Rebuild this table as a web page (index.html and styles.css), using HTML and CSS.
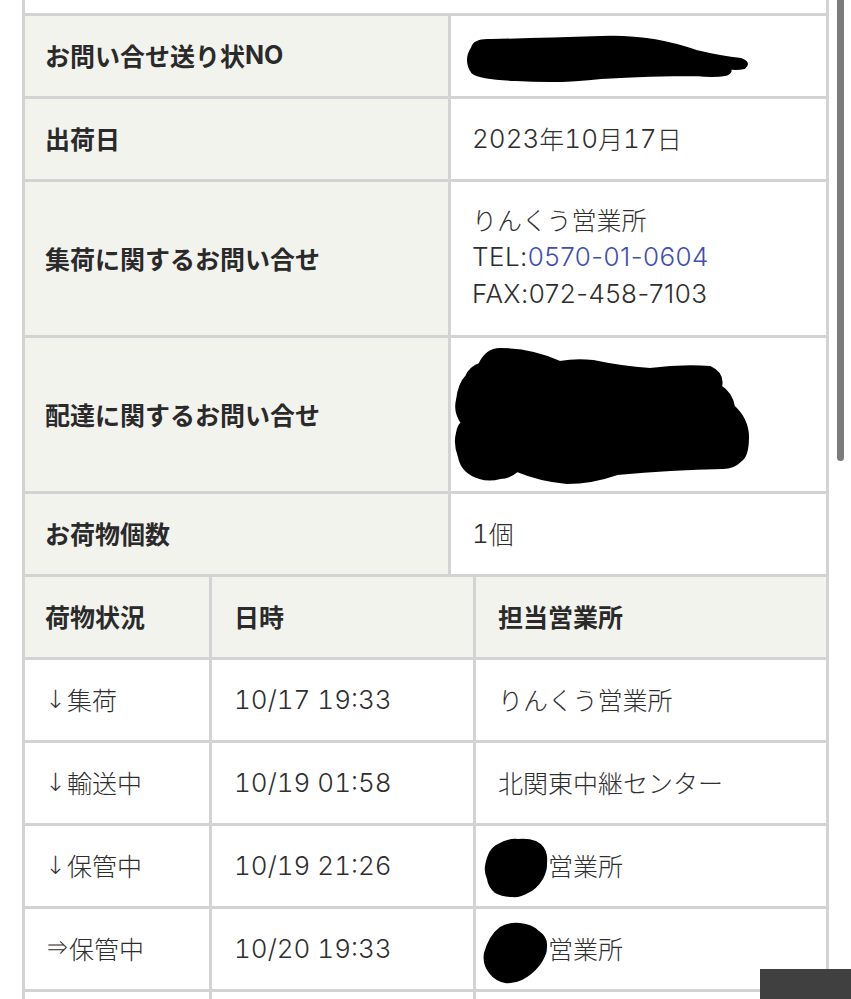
FILE: index.html
```html
<!DOCTYPE html>
<html lang="ja">
<head>
<meta charset="utf-8">
<title>お問い合せ</title>
<link rel="stylesheet" href="styles.css">
</head>
<body>
<div class="page">
  <div class="info">
    <div class="cell top"></div>
    <div class="cell th">お問い合せ送り状<span class="lat">NO</span></div>
    <div class="cell td">
      <svg class="blob" width="375" height="80" viewBox="0 0 375 80" aria-hidden="true">
        <path d="M22 32 Q24 24 40 25 Q90 24 150 22 Q200 20 245 36 Q270 42 290 44 Q298 47 293 51 Q285 53 276 51 Q282 56 274 58 Q262 60 245 58 Q200 58 150 61 Q110 66 65 63 Q30 62 22 56 Q14 44 22 32 Z" fill="#000" stroke="#000" stroke-width="4" stroke-linejoin="round"/>
      </svg>
    </div>
    <div class="cell th">出荷日</div>
    <div class="cell td"><span class="lat">2023</span>年<span class="lat">10</span>月<span class="lat">17</span>日</div>
    <div class="cell th">集荷に関するお問い合せ</div>
    <div class="cell td multi"><div>りんくう営業所<br><span class="lat prop">TEL:<a class="tel" href="#">0570-01-0604</a></span><br><span class="lat prop">FAX:072-458-7103</span></div></div>
    <div class="cell th">配達に関するお問い合せ</div>
    <div class="cell td">
      <svg class="blob big" width="375" height="153" viewBox="0 0 375 153" aria-hidden="true">
        <path d="M29 27 Q36 12 49 12 Q80 12 109 25 Q125 22 142 24 Q170 30 199 32 Q230 28 259 30 Q272 36 269 49 Q280 56 282 69 Q296 82 296 99 Q296 118 289 122 Q282 129 272 129 Q220 130 166 135 Q140 144 116 144 Q90 142 66 132 Q58 139 49 139 Q38 142 29 139 Q12 134 9 119 Q4 106 7 95 Q8 88 12 85 Q4 74 7 62 Q9 46 16 39 Q20 30 29 27 Z" fill="#000" stroke="#000" stroke-width="4" stroke-linejoin="round"/>
      </svg>
    </div>
    <div class="cell th">お荷物個数</div>
    <div class="cell td"><span class="lat">1</span>個</div>
  </div>
  <div class="status">
    <div class="cell th">荷物状況</div>
    <div class="cell th c2">日時</div>
    <div class="cell th c3">担当営業所</div>

    <div class="cell td"><span class="arrow">↓</span>集荷</div>
    <div class="cell td c2"><span class="lat">10/17 19:33</span></div>
    <div class="cell td c3">りんくう営業所</div>

    <div class="cell td"><span class="arrow">↓</span>輸送中</div>
    <div class="cell td c2"><span class="lat">10/19 01:58</span></div>
    <div class="cell td c3">北関東中継センター</div>

    <div class="cell td"><span class="arrow">↓</span>保管中</div>
    <div class="cell td c2"><span class="lat">10/19 21:26</span></div>
    <div class="cell td c3">〇〇営業所
      <svg class="dot" width="80" height="80" viewBox="0 0 80 80" aria-hidden="true">
        <path d="M9 40 Q12 22 22 18 Q32 12 42 13 Q52 12 60 15 Q70 20 71 30 Q72 44 67 53 Q60 64 52 67 Q44 72 36 71 Q26 71 19 67 Q12 61 11 53 Q8 46 9 40 Z" fill="#000"/>
      </svg>
    </div>

    <div class="cell td"><span class="arrow dbl">⇒</span>保管中</div>
    <div class="cell td c2"><span class="lat">10/20 19:33</span></div>
    <div class="cell td c3">〇〇営業所
      <svg class="dot" width="80" height="80" viewBox="0 0 80 80" aria-hidden="true">
        <path d="M8 44 Q13 26 24 18 Q32 13 44 14 Q56 15 63 22 Q72 28 71 38 Q70 48 64 56 Q56 66 46 71 Q38 75 29 74 Q19 72 13 64 Q6 55 8 44 Z" fill="#000"/>
      </svg>
    </div>

    <div class="cell td"></div>
    <div class="cell td c2"></div>
    <div class="cell td c3"></div>
  </div>
</div>
<div class="scrollbar"></div>
<div class="pagetop"></div>
</body>
</html>
```

FILE: styles.css
```css
html {
  overflow: hidden;
}

body {
  margin: 0;
  background: #ffffff;
  color: #333333;
  font-family: "Inter", "Noto Sans CJK JP", sans-serif;
  font-size: 25px;
  font-variant-numeric: tabular-nums;
}

.page {
  padding: 0 22px;
}

.info {
  display: grid;
  grid-template-columns: 423px 375px;
  grid-template-rows: 13px 80px 80px 153px 153px 80px;
  gap: 3px;
  padding: 0 3px 3px;
  background: #d3d3d3;
}

.status {
  display: grid;
  grid-template-columns: 184px 261px 350px;
  grid-auto-rows: 80px;
  gap: 3px;
  padding: 0 3px 3px;
  background: #d3d3d3;
}

.cell {
  position: relative;
  display: flex;
  align-items: center;
  padding-left: 20px;
  padding-bottom: 2px;
  background: #ffffff;
  white-space: nowrap;
}

.top {
  grid-column: 1 / 3;
}

.th {
  background: #f3f3ee;
  font-weight: 700;
  color: #2a2a2a;
}

.td {
  font-weight: 300;
  color: #2e2e2e;
}

.lat {
  font-size: 26px;
}

.prop {
  font-variant-numeric: normal;
  letter-spacing: 0.45px;
}

.th .lat {
  font-size: 25px;
}

.arrow {
  font-family: "DejaVu Sans", sans-serif;
  font-size: 25px;
  margin-right: 1px;
}

.arrow.dbl {
  font-size: 24px;
  margin-right: 0;
}

.info .td {
  padding-left: 21px;
}

.status .c2 {
  padding-left: 22px;
}

.status .c3 {
  padding-left: 22px;
}

.multi {
  line-height: 36.5px;
}

.tel {
  color: #3f4fb3;
  text-decoration: none;
}

.blob {
  position: absolute;
  left: 0;
  top: 0;
}

.dot {
  position: absolute;
  left: 0;
  top: 0;
}

.scrollbar {
  position: fixed;
  left: 837px;
  top: -20px;
  width: 7px;
  height: 481px;
  border-radius: 4px;
  background: #7c7c7c;
}

.pagetop {
  position: fixed;
  left: 760px;
  top: 969px;
  width: 91px;
  height: 30px;
  background: #404040;
}
```
